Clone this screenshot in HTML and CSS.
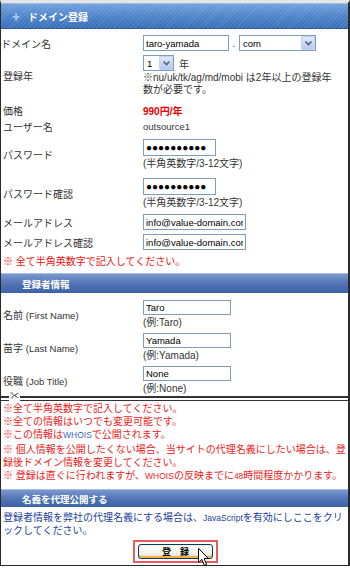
FILE: index.html
```html
<!DOCTYPE html>
<html lang="ja">
<head>
<meta charset="utf-8">
<title>ドメイン登録</title>
<link rel="stylesheet" href="styles.css">
</head>
<body>
<div class="frame">
  <div class="title"><span class="plus">✚</span>ドメイン登録</div>

  <div class="form">
    <div class="row r-domain">
      <div class="lbl lbl-domain">ドメイン名</div>
      <div class="val inline">
        <input class="inp w85" type="text" value="taro-yamada">
        <span class="dot">.</span>
        <span class="sel w77"><span class="sel-text">com</span><span class="arrow"><svg width="9" height="7" viewBox="0 0 9 7"><path d="M1.5 1.5 L4.5 4.5 L7.5 1.5" fill="none" stroke="#4d6185" stroke-width="1.6"/></svg></span></span>
      </div>
    </div>

    <div class="row r-year">
      <div class="lbl">登録年</div>
      <div class="val">
        <div class="inline">
          <span class="sel w31"><span class="sel-text">1</span><span class="arrow"><svg width="9" height="7" viewBox="0 0 9 7"><path d="M1.5 1.5 L4.5 4.5 L7.5 1.5" fill="none" stroke="#4d6185" stroke-width="1.6"/></svg></span></span>
          <span class="unit">年</span>
        </div>
        <div class="note note-year">※nu/uk/tk/ag/md/mobi は2年以上の登録年数が必要です。</div>
      </div>
    </div>

    <div class="row r-line">
      <div class="lbl">価格</div>
      <div class="val price">990円/年</div>
    </div>

    <div class="row r-line">
      <div class="lbl">ユーザー名</div>
      <div class="val latin">outsource1</div>
    </div>

    <div class="row r-pw">
      <div class="lbl">パスワード</div>
      <div class="val">
        <div class="inp pw w72">●●●●●●●●●●</div>
        <div class="note">(半角英数字/3-12文字)</div>
      </div>
    </div>

    <div class="row r-pw">
      <div class="lbl">パスワード確認</div>
      <div class="val">
        <div class="inp pw w72">●●●●●●●●●●</div>
        <div class="note">(半角英数字/3-12文字)</div>
      </div>
    </div>

    <div class="row r-mail">
      <div class="lbl">メールアドレス</div>
      <div class="val"><input class="inp w102" type="text" value="info@value-domain.com"></div>
    </div>

    <div class="row r-mail">
      <div class="lbl">メールアドレス確認</div>
      <div class="val"><input class="inp w102" type="text" value="info@value-domain.com"></div>
    </div>
  </div>

  <p class="warn">※ 全て半角英数字で記入してください。</p>

  <div class="sect">登録者情報</div>

  <div class="clip">
    <div class="row r-reg">
      <div class="lbl">名前 <span class="en">(First Name)</span></div>
      <div class="val">
        <input class="inp w87 h15" type="text" value="Taro">
        <div class="note">(例:Taro)</div>
      </div>
    </div>
    <div class="row r-reg">
      <div class="lbl">苗字 <span class="en">(Last Name)</span></div>
      <div class="val">
        <input class="inp w87 h15" type="text" value="Yamada">
        <div class="note">(例:Yamada)</div>
      </div>
    </div>
    <div class="row r-reg">
      <div class="lbl">役職 <span class="en">(Job Title)</span></div>
      <div class="val">
        <input class="inp w87 h15" type="text" value="None">
        <div class="note">(例:None)</div>
      </div>
    </div>
  </div>

  <div class="tear"><span class="scissors">✂</span></div>

  <div class="notes">
    <p>※全て半角英数字で記入してください。</p>
    <p>※全ての情報はいつでも変更可能です。</p>
    <p>※この情報は<span class="whois">WHOIS</span>で公開されます。</p>
    <p>※ 個人情報を公開したくない場合、当サイトの代理名義にしたい場合は、登録後ドメイン情報を変更してください。</p>
    <p>※ 登録は直ぐに行われますが、<span class="sm">WHOIS</span>の反映までに<span class="sm">48</span>時間程度かかります。</p>
  </div>

  <div class="sect sect2">名義を代理公開する</div>

  <p class="proxy"><span>登録者情報を弊社の代理名義にする場合は、</span><span class="sm">JavaScript</span><span>を有効にしここをクリックしてください。</span></p>

  <div class="actions">
    <span class="hl"><button class="btn" type="button">登　録</button></span>
    <svg class="cursor" width="12" height="19" viewBox="0 0 12 19"><path d="M0.5 0.5 L0.5 14.5 L3.8 11.4 L6.3 17.3 L8.6 16.3 L6.1 10.6 L10.6 10.6 Z" fill="#fff" stroke="#000" stroke-width="1"/></svg>
  </div>
</div>
</body>
</html>
```

FILE: styles.css
```css
* { box-sizing: border-box; }
html, body { margin: 0; padding: 0; background: #fff; }
body {
  font-family: "Liberation Sans", "Noto Sans CJK JP", sans-serif;
  font-size: 10px;
  color: #333;
}
p { margin: 0; }

.frame {
  width: 350px;
  height: 566px;
  border-left: 1px solid #2a2a2a;
  border-right: 2px solid #2a2a2a;
  border-bottom: 1px solid #2a2a2a;
  border-top: 3px solid #e4e4e4;
  position: relative;
  overflow: hidden;
}

.title {
  height: 26px;
  display: flex;
  align-items: center;
  padding-left: 11px;
  color: #fff;
  font-weight: bold;
  font-size: 10px;
  background:
    repeating-linear-gradient(135deg, rgba(255,255,255,0.10) 0 1px, rgba(255,255,255,0) 1px 3px),
    linear-gradient(#72a0dc, #4a82c9 55%, #3a6fb8);
  border-top: 1px solid #9cc0ea;
  border-bottom: 1px solid #2d5d9c;
}
.plus { color: #a8c8f0; font-size: 8px; margin-right: 8px; }

.form { padding-top: 4px; }

.row {
  display: grid;
  grid-template-columns: 142px 1fr;
  align-items: center;
}
.lbl { padding-left: 2px; color: #333; white-space: nowrap; }
.lbl-domain { padding-left: 0; }
.val { color: #333; }
.inline { display: flex; align-items: center; }

.r-domain { height: 20px; }
.r-year { padding: 2px 0 6px; }
.r-line { height: 16px; }
.r-pw { padding: 5px 0 3px; }
.r-mail { height: 20px; }
.r-reg { padding: 2px 0 2px; }

.inp {
  display: block;
  height: 16px;
  border: 1px solid #7f9db9;
  background: #fff;
  padding: 0 2px;
  font-family: "Liberation Sans", sans-serif;
  font-size: 9.5px;
  color: #000;
  outline: none;
  margin: 0;
}
.h15 { height: 15px; }
.w85 { width: 86px; }
.w72 { width: 73px; }
.w102 { width: 103px; }
.w87 { width: 88px; }

.pw {
  height: 17px;
  line-height: 15px;
  font-size: 10px;
  letter-spacing: 0;
  padding-left: 2px;
  color: #000;
  overflow: hidden;
  white-space: nowrap;
}

.dot { width: 10px; text-align: center; color: #333; }

.sel {
  display: inline-flex;
  align-items: center;
  height: 16px;
  border: 1px solid #7f9db9;
  background: #fff;
  padding-left: 3px;
  font-size: 9.5px;
  color: #000;
}
.sel-text { flex: 1; }
.w77 { width: 77px; }
.w31 { width: 31px; }
.arrow {
  width: 14px;
  height: 14px;
  display: flex;
  align-items: center;
  justify-content: center;
  background: linear-gradient(#dfe8fb, #b7c9f0);
  border: 1px solid #c3d3f5;
  border-radius: 1px;
}
.unit { margin-left: 5px; }

.note { line-height: 12px; margin-top: 1px; color: #333; }
.note-year { padding-right: 8px; }
.r-pw .note { line-height: 13px; }
.r-reg .note { line-height: 13px; }

.price { color: #ee0000; font-weight: bold; }
.latin { font-size: 9.5px; }
.en { font-size: 9.5px; }

.warn {
  color: #ee1111;
  line-height: 14px;
  margin-top: 3px;
  padding-left: 2px;
}

.sect {
  height: 20px;
  margin-top: 4px;
  display: flex;
  align-items: center;
  padding-left: 21px;
  color: #fff;
  font-weight: bold;
  font-size: 9.5px;
  background: linear-gradient(#7b98cf, #5275b6 50%, #3e62a6);
  border-top: 1px solid #a9bde2;
}

.clip { height: 103px; overflow: hidden; padding-top: 5px; }

.tear {
  position: relative;
  height: 5px;
  border-top: 2px solid #333;
  border-bottom: 1px solid #333;
}
.scissors {
  position: absolute;
  left: 8px;
  top: -7px;
  font-size: 9px;
  line-height: 10px;
  color: #222;
  background: #fff;
  padding: 0 1px;
}

.notes { padding: 1px 0 0 2px; color: #ee2222; line-height: 13.2px; }
.whois { color: #3766c0; font-size: 8.5px; }
.sm { font-size: 8.5px; line-height: 1; }

.sect2 { margin-top: 7px; height: 18px; }

.proxy {
  color: #1e3f9e;
  line-height: 13px;
  padding: 4px 4px 0 2px;
}

.actions {
  position: relative;
  display: flex;
  justify-content: center;
  padding-top: 3px;
  margin-left: 2px;
}
.hl {
  display: inline-block;
  border: 2px solid #ea5a5a;
  padding: 2px 3px;
}
.btn {
  display: block;
  width: 75px;
  height: 15px;
  padding: 0;
  font-family: "Noto Sans CJK JP", sans-serif;
  font-size: 9px;
  font-weight: bold;
  color: #000;
  border: 1px solid #003c74;
  border-radius: 3px;
  background: linear-gradient(#fff, #f0efe7 70%, #d6d0c0);
  box-shadow: inset 0 -2px 0 #f6b23a, inset 0 1px 0 #fff4d0;
}
.cursor { position: absolute; left: 195px; top: 11px; }
```
